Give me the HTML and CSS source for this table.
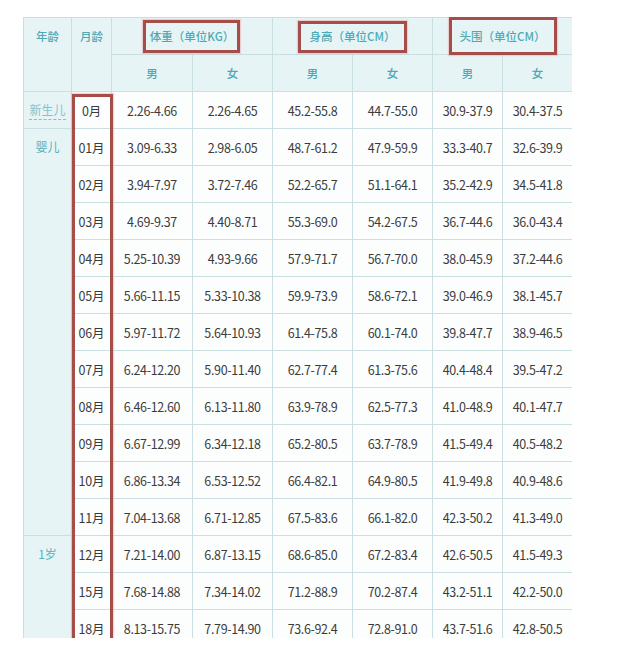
FILE: index.html
```html
<!DOCTYPE html>
<html lang="zh-CN">
<head>
<meta charset="utf-8">
<title>宝宝身高体重标准表</title>
<link rel="stylesheet" href="styles.css">
</head>
<body>
<div class="page">
  <div class="frame">
    <table class="chart">
      <colgroup>
        <col class="c-age"><col class="c-month">
        <col class="c-w"><col class="c-w2">
        <col class="c-h"><col class="c-h">
        <col class="c-hc"><col class="c-hc2">
      </colgroup>
      <thead>
        <tr class="hr1">
          <th rowspan="2" class="top">年龄</th>
          <th rowspan="2" class="top">月龄</th>
          <th colspan="2">体重（单位KG）</th>
          <th colspan="2">身高（单位CM）</th>
          <th colspan="2">头围（单位CM）</th>
        </tr>
        <tr class="hr2">
          <th>男</th><th>女</th><th>男</th><th>女</th><th>男</th><th>女</th>
        </tr>
      </thead>
      <tbody>
        <tr><td class="age"><span class="abbr">新生儿</span></td><td class="m">0月</td><td>2.26-4.66</td><td>2.26-4.65</td><td>45.2-55.8</td><td>44.7-55.0</td><td>30.9-37.9</td><td>30.4-37.5</td></tr>
        <tr><td class="age" rowspan="11">婴儿</td><td class="m">01月</td><td>3.09-6.33</td><td>2.98-6.05</td><td>48.7-61.2</td><td>47.9-59.9</td><td>33.3-40.7</td><td>32.6-39.9</td></tr>
        <tr><td class="m">02月</td><td>3.94-7.97</td><td>3.72-7.46</td><td>52.2-65.7</td><td>51.1-64.1</td><td>35.2-42.9</td><td>34.5-41.8</td></tr>
        <tr><td class="m">03月</td><td>4.69-9.37</td><td>4.40-8.71</td><td>55.3-69.0</td><td>54.2-67.5</td><td>36.7-44.6</td><td>36.0-43.4</td></tr>
        <tr><td class="m">04月</td><td>5.25-10.39</td><td>4.93-9.66</td><td>57.9-71.7</td><td>56.7-70.0</td><td>38.0-45.9</td><td>37.2-44.6</td></tr>
        <tr><td class="m">05月</td><td>5.66-11.15</td><td>5.33-10.38</td><td>59.9-73.9</td><td>58.6-72.1</td><td>39.0-46.9</td><td>38.1-45.7</td></tr>
        <tr><td class="m">06月</td><td>5.97-11.72</td><td>5.64-10.93</td><td>61.4-75.8</td><td>60.1-74.0</td><td>39.8-47.7</td><td>38.9-46.5</td></tr>
        <tr><td class="m">07月</td><td>6.24-12.20</td><td>5.90-11.40</td><td>62.7-77.4</td><td>61.3-75.6</td><td>40.4-48.4</td><td>39.5-47.2</td></tr>
        <tr><td class="m">08月</td><td>6.46-12.60</td><td>6.13-11.80</td><td>63.9-78.9</td><td>62.5-77.3</td><td>41.0-48.9</td><td>40.1-47.7</td></tr>
        <tr><td class="m">09月</td><td>6.67-12.99</td><td>6.34-12.18</td><td>65.2-80.5</td><td>63.7-78.9</td><td>41.5-49.4</td><td>40.5-48.2</td></tr>
        <tr><td class="m">10月</td><td>6.86-13.34</td><td>6.53-12.52</td><td>66.4-82.1</td><td>64.9-80.5</td><td>41.9-49.8</td><td>40.9-48.6</td></tr>
        <tr><td class="m">11月</td><td>7.04-13.68</td><td>6.71-12.85</td><td>67.5-83.6</td><td>66.1-82.0</td><td>42.3-50.2</td><td>41.3-49.0</td></tr>
        <tr><td class="age" rowspan="3">1岁</td><td class="m">12月</td><td>7.21-14.00</td><td>6.87-13.15</td><td>68.6-85.0</td><td>67.2-83.4</td><td>42.6-50.5</td><td>41.5-49.3</td></tr>
        <tr><td class="m">15月</td><td>7.68-14.88</td><td>7.34-14.02</td><td>71.2-88.9</td><td>70.2-87.4</td><td>43.2-51.1</td><td>42.2-50.0</td></tr>
        <tr><td class="m">18月</td><td>8.13-15.75</td><td>7.79-14.90</td><td>73.6-92.4</td><td>72.8-91.0</td><td>43.7-51.6</td><td>42.8-50.5</td></tr>
      </tbody>
    </table>
    <div class="mark mark-weight"></div>
    <div class="mark mark-height"></div>
    <div class="mark mark-head"></div>
    <div class="mark mark-month"></div>
  </div>
</div>
</body>
</html>
```

FILE: styles.css
```css
html, body {
  margin: 0;
  padding: 0;
  background: #ffffff;
}

.page {
  padding: 17px 0 0 23px;
  font-family: "Noto Sans CJK SC", "Noto Sans", sans-serif;
}

.frame {
  position: relative;
  width: 549px;
  height: 621px;
  overflow: hidden;
}

.chart {
  border-collapse: collapse;
  table-layout: fixed;
  width: 549px;
}

.c-age { width: 48px; }
.c-month { width: 40px; }
.c-w { width: 81px; }
.c-w2 { width: 80px; }
.c-h { width: 80px; }
.c-hc { width: 70px; }
.c-hc2 { width: 70px; }

.chart th,
.chart td {
  border: 1px solid #cadfe1;
  padding: 0;
  text-align: center;
  vertical-align: middle;
}

.chart th {
  background: #e6f4f6;
  color: #4fa9b4;
  font-weight: 500;
  font-size: 11.5px;
}

.chart th.top {
  vertical-align: top;
  line-height: 36px;
}

.hr1 { height: 37px; }
.hr2 { height: 37px; }

.chart tbody tr { height: 37px; }

.chart td {
  background: #fcfefe;
  color: #3b3b3b;
  font-size: 12.5px;
  letter-spacing: -0.35px;
}

.chart td.age {
  background: #e6f4f6;
  color: #5ab0ba;
  font-size: 12px;
  vertical-align: top;
  line-height: 35px;
  letter-spacing: 0;
}

.abbr {
  color: #86c3c8;
  border-bottom: 1px dashed #9fb4b6;
  padding-bottom: 2px;
  line-height: 14px;
  display: inline-block;
}

.chart td.m {
  letter-spacing: -0.2px;
}

.mark {
  position: absolute;
  border: 3px solid #a64c49;
  box-shadow: 0 0 1px 1px rgba(240, 170, 170, 0.5);
  pointer-events: none;
}

.mark-weight {
  left: 120px;
  top: 3px;
  width: 91px;
  height: 27px;
}

.mark-height {
  left: 275px;
  top: 4px;
  width: 103px;
  height: 26px;
}

.mark-head {
  left: 426px;
  top: 0;
  width: 102px;
  height: 32px;
}

.mark-month {
  left: 49px;
  top: 77px;
  width: 35px;
  height: 600px;
}
```
